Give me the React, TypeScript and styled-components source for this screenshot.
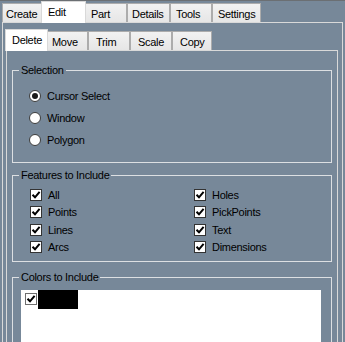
import React from "react";
import styled, { createGlobalStyle } from "styled-components";

const SLATE = "#778899";

const GlobalStyle = createGlobalStyle`
  html, body {
    margin: 0;
    padding: 0;
    background: ${SLATE};
  }
`;

const Window = styled.div`
  box-sizing: border-box;
  width: 345px;
  height: 342px;
  overflow: hidden;
  background: ${SLATE};
  border-top: 1px solid #6b6f73;
  font-family: "Liberation Sans", Arial, sans-serif;
  font-size: 11px;
  letter-spacing: -0.3px;
  color: #000;
`;

const TabStrip = styled.div<{ $height: number; $inset: number }>`
  position: relative;
  z-index: 1;
  display: flex;
  align-items: flex-end;
  height: ${(p) => p.$height}px;
  padding-left: ${(p) => p.$inset}px;
`;

const Tab = styled.div<{ $w: number; $pad: number; $active?: boolean }>`
  box-sizing: border-box;
  position: relative;
  display: flex;
  align-items: center;
  flex: none;
  width: ${(p) => (p.$active ? p.$w + 4 : p.$w)}px;
  height: ${(p) => (p.$active ? 22 : 19)}px;
  margin: 0 ${(p) => (p.$active ? -2 : 0)}px ${(p) => (p.$active ? -1 : 0)}px;
  padding: ${(p) => (p.$active ? "0 0 2px" : "2px 0 0")} ${(p) => p.$pad}px;
  z-index: ${(p) => (p.$active ? 2 : 1)};
  background: ${(p) =>
    p.$active ? "#ffffff" : "linear-gradient(#f2f2f2, #e6e6e6)"};
  border: 1px solid ${(p) => (p.$active ? "#d9d9d9" : "#acacac")};
  border-bottom: none;
  white-space: nowrap;
`;

const Page = styled.div<{ $margin: string }>`
  box-sizing: border-box;
  margin: ${(p) => p.$margin};
  border: 1px solid #d9d9d9;
  background: ${SLATE};
`;

const OuterBody = styled.div`
  padding: 0 4px 0 3px;
`;

const InnerBody = styled.div`
  display: flex;
  flex-direction: column;
  padding: 0 5px;
`;

const Group = styled.fieldset<{ $top: number; $pt: number; $pb: number }>`
  margin: ${(p) => p.$top}px 0 0;
  padding: ${(p) => p.$pt}px 0 ${(p) => p.$pb}px;
  border: 1px solid #dcdfe2;
  min-width: 0;
`;

const Legend = styled.legend`
  margin-left: 6px;
  padding: 0 2px;
  line-height: 13px;
`;

const RadioList = styled.div`
  display: flex;
  flex-direction: column;
  padding-left: 16px;
`;

const Row = styled.label<{ $h: number }>`
  display: flex;
  align-items: center;
  gap: 6px;
  height: ${(p) => p.$h}px;
`;

const RadioDot = styled.span<{ $on?: boolean }>`
  box-sizing: border-box;
  display: flex;
  align-items: center;
  justify-content: center;
  width: 12px;
  height: 12px;
  border-radius: 50%;
  background: #fff;
  border: 1px solid #3c3c3c;
  &::after {
    content: "";
    display: ${(p) => (p.$on ? "block" : "none")};
    width: 6px;
    height: 6px;
    border-radius: 50%;
    background: #1a1a1a;
  }
`;

const Box = styled.span<{ $edge: string; $offset?: number }>`
  box-sizing: border-box;
  display: flex;
  align-items: center;
  justify-content: center;
  flex: none;
  width: 12px;
  height: 12px;
  margin-top: ${(p) => p.$offset ?? 0}px;
  background: #fff;
  border: 1px solid ${(p) => p.$edge};
`;

const FeatureGrid = styled.div`
  display: grid;
  grid-template-columns: 164px 1fr;
  grid-auto-flow: column;
  grid-template-rows: repeat(4, 17.5px);
  padding-left: 17px;
`;

const ListBox = styled.div`
  height: 70px;
  margin: 0 10px 0 8px;
  background: #fff;
  padding: 1px 0 0 4px;
`;

const ListItem = styled.div`
  display: flex;
  align-items: flex-start;
  gap: 1px;
`;

const Swatch = styled.span<{ $color: string }>`
  width: 40px;
  height: 19px;
  margin-top: -1px;
  background: ${(p) => p.$color};
`;

const CheckMark = () => (
  <svg width="10" height="10" viewBox="0 0 10 10">
    <path d="M1.5 4.8 L4 7.3 L8.6 1.8" fill="none" stroke="#000" strokeWidth="2" />
  </svg>
);

const Check = ({ edge = "#333", offset }: { edge?: string; offset?: number }) => (
  <Box $edge={edge} $offset={offset}>
    <CheckMark />
  </Box>
);

const outerTabs = [
  { label: "Create", w: 41, pad: 3 },
  { label: "Edit", w: 41, pad: 6, active: true },
  { label: "Part", w: 43, pad: 6 },
  { label: "Details", w: 43, pad: 4 },
  { label: "Tools", w: 42, pad: 5 },
  { label: "Settings", w: 49, pad: 5 },
];

const innerTabs = [
  { label: "Delete", w: 39, pad: 6, active: true },
  { label: "Move", w: 42, pad: 5 },
  { label: "Trim", w: 42, pad: 7 },
  { label: "Scale", w: 42, pad: 7 },
  { label: "Copy", w: 40, pad: 7 },
];

const radios = [
  { label: "Cursor Select", on: true },
  { label: "Window" },
  { label: "Polygon" },
];

const features = [
  "All",
  "Points",
  "Lines",
  "Arcs",
  "Holes",
  "PickPoints",
  "Text",
  "Dimensions",
];

export default function App() {
  return (
    <>
      <GlobalStyle />
      <Window>
        <TabStrip $height={21} $inset={2}>
          {outerTabs.map((t) => (
            <Tab key={t.label} $w={t.w} $pad={t.pad} $active={t.active}>
              {t.label}
            </Tab>
          ))}
        </TabStrip>
        <Page $margin="0 2px 0 2px">
          <OuterBody>
            <TabStrip $height={27} $inset={1}>
              {innerTabs.map((t) => (
                <Tab key={t.label} $w={t.w} $pad={t.pad} $active={t.active}>
                  {t.label}
                </Tab>
              ))}
            </TabStrip>
            <Page $margin="0">
              <InnerBody>
                <Group $top={13} $pt={8} $pb={11}>
                  <Legend>Selection</Legend>
                  <RadioList>
                    {radios.map((r) => (
                      <Row key={r.label} $h={22}>
                        <RadioDot $on={r.on} />
                        {r.label}
                      </Row>
                    ))}
                  </RadioList>
                </Group>
                <Group $top={6} $pt={4} $pb={5}>
                  <Legend>Features to Include</Legend>
                  <FeatureGrid>
                    {features.map((f) => (
                      <Row key={f} $h={17.5}>
                        <Check />
                        {f}
                      </Row>
                    ))}
                  </FeatureGrid>
                </Group>
                <Group $top={9} $pt={6} $pb={6}>
                  <Legend>Colors to Include</Legend>
                  <ListBox>
                    <ListItem>
                      <Check edge="#6e6e6e" offset={2} />
                      <Swatch $color="#000" />
                    </ListItem>
                  </ListBox>
                </Group>
              </InnerBody>
            </Page>
          </OuterBody>
        </Page>
      </Window>
    </>
  );
}
